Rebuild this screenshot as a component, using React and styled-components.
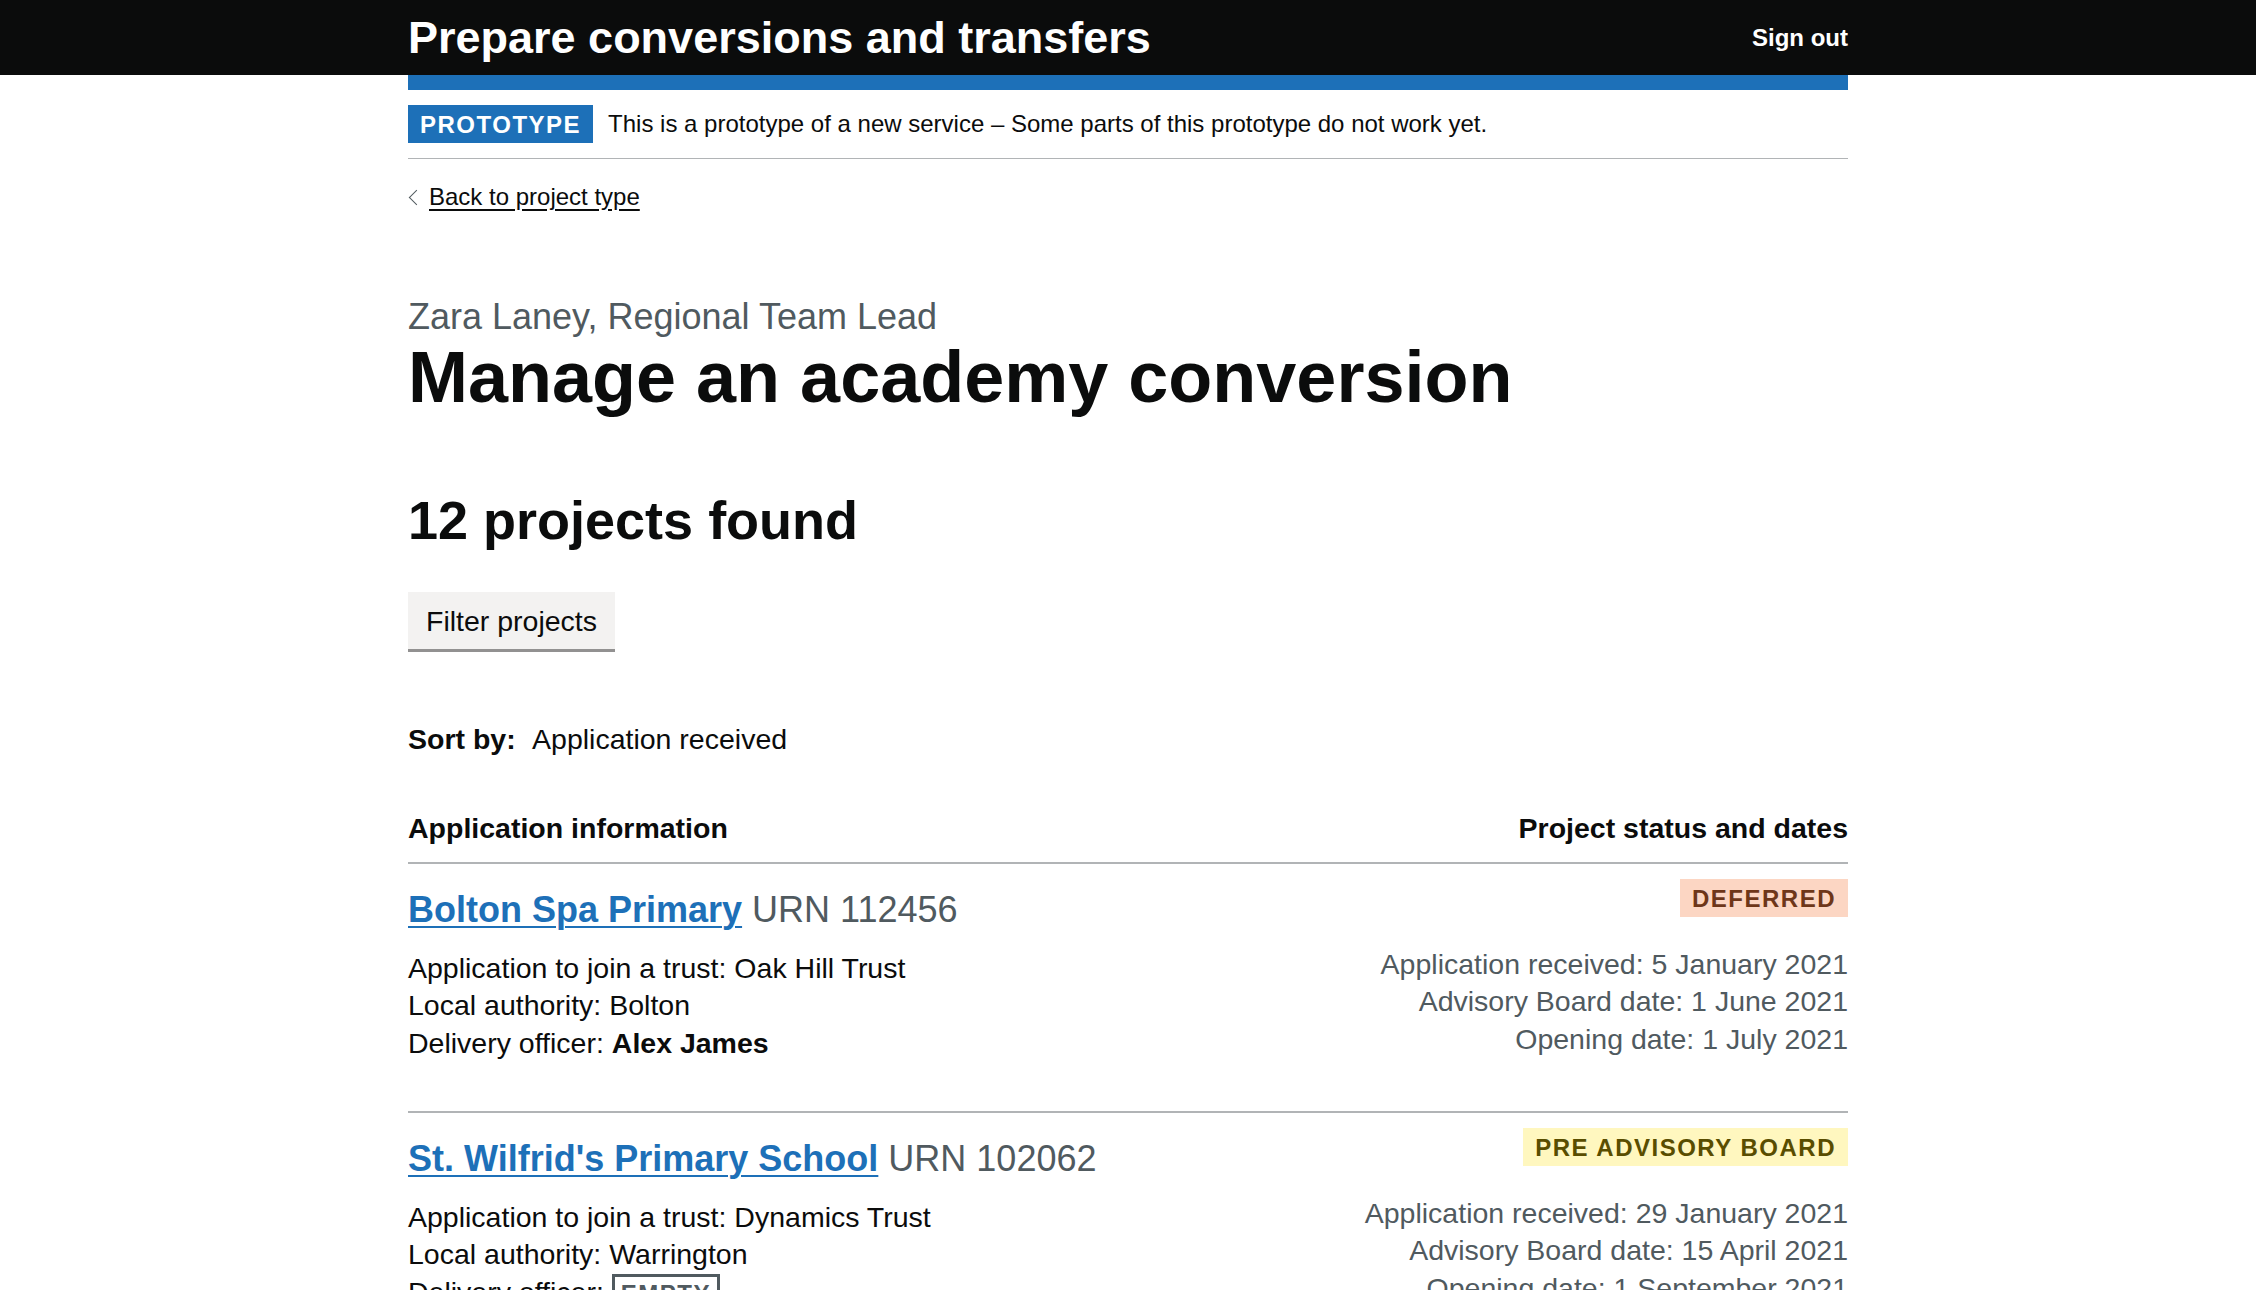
import React from 'react';
import styled, { createGlobalStyle, css } from 'styled-components';

const GlobalStyle = createGlobalStyle`
  body {
    margin: 0;
    background: #ffffff;
    color: #0b0c0c;
    font-family: 'Liberation Sans', Arial, sans-serif;
  }
`;

const Header = styled.header`
  background: #0b0c0c;
  height: 75px;
`;

const Container = styled.div`
  width: 1440px;
  margin: 0 auto;
`;

const HeaderInner = styled(Container)`
  height: 100%;
  display: flex;
  align-items: center;
  justify-content: space-between;
`;

const ServiceName = styled.a`
  color: #ffffff;
  font-size: 45px;
  font-weight: 700;
  line-height: 1;
  text-decoration: none;
`;

const SignOut = styled.a`
  color: #ffffff;
  font-size: 24px;
  font-weight: 700;
  text-decoration: none;
`;

const BlueBar = styled.div`
  height: 15px;
  background: #1d70b8;
`;

const PhaseBanner = styled.div`
  display: flex;
  align-items: center;
  padding: 15px 0;
  border-bottom: 1px solid #b1b4b6;
  font-size: 24px;
  line-height: 30px;
`;

const tagColours = {
  blue: css`
    background: #1d70b8;
    color: #ffffff;
  `,
  orange: css`
    background: #fcd6c3;
    color: #6e3619;
  `,
  yellow: css`
    background: #fff7bf;
    color: #594d00;
  `,
  empty: css`
    background: #ffffff;
    color: #505a5f;
    border: 3px solid #505a5f;
    padding: 4.5px 6px 3px;
  `,
};

const Tag = styled.strong`
  display: inline-block;
  font-size: 24px;
  font-weight: 700;
  line-height: 24px;
  letter-spacing: 1.5px;
  text-transform: uppercase;
  padding: 7.5px 12px 6px;
  ${props => tagColours[props.colour || 'blue']}
`;

const PhaseTag = styled(Tag)`
  margin-right: 15px;
`;

const BackLink = styled.a`
  display: inline-block;
  margin: 23.5px 0 22.5px;
  font-size: 24px;
  line-height: 30px;
  color: #0b0c0c;
  text-decoration: underline;
  text-underline-offset: 0.15em;

  &::before {
    content: '';
    display: inline-block;
    width: 10px;
    height: 10px;
    border: solid #505a5f;
    border-width: 1.5px 0 0 1.5px;
    transform: rotate(-45deg);
    margin: 0 7px 2px 3px;
  }
`;

const Main = styled.main`
  padding-top: 59px;
`;

const Caption = styled.span`
  display: block;
  font-size: 36px;
  line-height: 45px;
  color: #505a5f;
  margin-bottom: 1px;
`;

const Title = styled.h1`
  margin: 0 0 75px;
  font-size: 72px;
  line-height: 75px;
  font-weight: 700;
`;

const Count = styled.h2`
  margin: 0 0 42px;
  font-size: 54px;
  line-height: 60px;
  font-weight: 700;
`;

const Button = styled.button`
  display: block;
  margin: 0 0 72px;
  padding: 12px 18px 10.5px;
  border: none;
  background: #f3f2f1;
  box-shadow: 0 3px 0 #929191;
  color: #0b0c0c;
  font-family: inherit;
  font-size: 28.5px;
  line-height: 34.5px;
  cursor: pointer;
`;

const Body = styled.p`
  margin: 0;
  font-size: 28.5px;
  line-height: 37.5px;
  color: ${props => (props.secondary ? '#505a5f' : '#0b0c0c')};
  text-align: ${props => (props.right ? 'right' : 'left')};
`;

const SortLabel = styled.strong`
  margin-right: 10px;
`;

const SortRow = styled(Body)`
  margin-bottom: 51.5px;
`;

const ListHead = styled.div`
  display: flex;
  justify-content: space-between;
  padding-bottom: 15px;
  border-bottom: 2px solid #b1b4b6;
  font-size: 28.5px;
  line-height: 37.5px;
  font-weight: 700;
`;

const Project = styled.div`
  display: grid;
  grid-template-columns: 1fr auto;
  padding: 15px 0 49px;
  border-bottom: 2px solid #b1b4b6;
`;

const ProjectName = styled.h3`
  margin: 7.5px 0 18px;
  font-size: 36px;
  line-height: 45px;
  font-weight: 400;
  color: #505a5f;
`;

const SchoolLink = styled.a`
  color: #1d70b8;
  font-weight: 700;
  text-decoration: underline;
  text-decoration-thickness: 2px;
  text-underline-offset: 0.12em;
`;

const Status = styled.div`
  display: flex;
  flex-direction: column;
  align-items: flex-end;
`;

const Dates = styled.div`
  margin-top: 29px;
`;

const projects = [
  {
    name: 'Bolton Spa Primary',
    urn: '112456',
    trust: 'Oak Hill Trust',
    authority: 'Bolton',
    officer: 'Alex James',
    status: 'Deferred',
    colour: 'orange',
    received: '5 January 2021',
    board: '1 June 2021',
    opening: '1 July 2021',
  },
  {
    name: "St. Wilfrid's Primary School",
    urn: '102062',
    trust: 'Dynamics Trust',
    authority: 'Warrington',
    officer: null,
    status: 'Pre advisory board',
    colour: 'yellow',
    received: '29 January 2021',
    board: '15 April 2021',
    opening: '1 September 2021',
  },
];

const ProjectRow = ({ project }) => (
  <Project>
    <div>
      <ProjectName>
        <SchoolLink href="#">{project.name}</SchoolLink> URN {project.urn}
      </ProjectName>
      <Body>Application to join a trust: {project.trust}</Body>
      <Body>Local authority: {project.authority}</Body>
      <Body>
        Delivery officer:{' '}
        {project.officer ? <strong>{project.officer}</strong> : <Tag colour="empty">Empty</Tag>}
      </Body>
    </div>
    <Status>
      <Tag colour={project.colour}>{project.status}</Tag>
      <Dates>
        <Body secondary right>Application received: {project.received}</Body>
        <Body secondary right>Advisory Board date: {project.board}</Body>
        <Body secondary right>Opening date: {project.opening}</Body>
      </Dates>
    </Status>
  </Project>
);

const App = () => (
  <>
    <GlobalStyle />
    <Header>
      <HeaderInner>
        <ServiceName href="#">Prepare conversions and transfers</ServiceName>
        <SignOut href="#">Sign out</SignOut>
      </HeaderInner>
    </Header>
    <Container>
      <BlueBar />
      <PhaseBanner>
        <PhaseTag>Prototype</PhaseTag>
        <span>This is a prototype of a new service – Some parts of this prototype do not work yet.</span>
      </PhaseBanner>
      <BackLink href="#">Back to project type</BackLink>
      <Main>
        <Caption>Zara Laney, Regional Team Lead</Caption>
        <Title>Manage an academy conversion</Title>
        <Count>12 projects found</Count>
        <Button>Filter projects</Button>
        <SortRow>
          <SortLabel>Sort by:</SortLabel> Application received
        </SortRow>
        <ListHead>
          <span>Application information</span>
          <span>Project status and dates</span>
        </ListHead>
        {projects.map(project => (
          <ProjectRow key={project.urn} project={project} />
        ))}
      </Main>
    </Container>
  </>
);

export default App;
